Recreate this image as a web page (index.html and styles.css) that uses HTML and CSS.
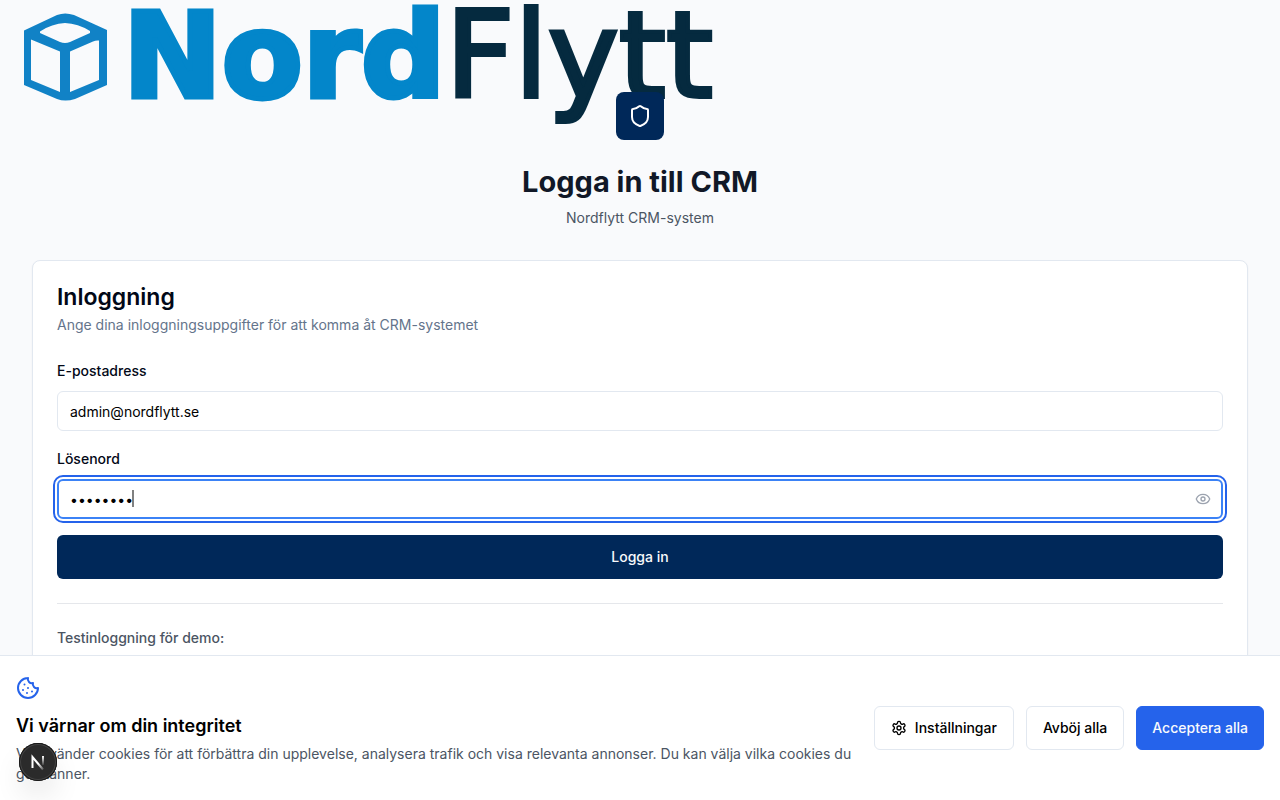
FILE: index.html
```html
<!DOCTYPE html>
<html lang="sv">
<head>
<meta charset="utf-8">
<meta name="viewport" content="width=device-width, initial-scale=1">
<title>Logga in till CRM</title>
<link rel="stylesheet" href="styles.css">
</head>
<body>
<a class="brand" href="#" aria-label="NordFlytt">
  <svg class="brand-mark" viewBox="0 0 83 88" fill="#1182c6" fill-rule="evenodd" aria-hidden="true">
    <path d="M0 17.500 33 2Q41 -1 50 2L83 17V72L51 86Q41 89 33 86L0 72ZM16 20 36 29Q41 31 46 29L66 20V18Q54 10.500 41 10Q28 10.500 16 18.500ZM7 26.500V67L36 79V38.500ZM46 38.500V79L75 67V27.500Q72 27 69 28.500Z"/>
  </svg>
  <span class="brand-name"><span class="brand-nord">Nord</span><span class="brand-flytt">Flytt</span></span>
</a>

<main class="page">
  <header class="intro">
    <div class="shield">
      <svg width="24" height="24" viewBox="0 0 24 24" fill="none" stroke="currentColor" stroke-width="2" stroke-linecap="round" stroke-linejoin="round" aria-hidden="true"><path d="M20 13c0 5-3.500 7.500-7.660 8.950a1 1 0 0 1-.67-.01C7.500 20.500 4 18 4 13V6a1 1 0 0 1 1-1c2 0 4.500-1.200 6.240-2.720a1.170 1.170 0 0 1 1.520 0C14.510 3.810 17 5 19 5a1 1 0 0 1 1 1z"/></svg>
    </div>
    <h1 class="intro-title">Logga in till CRM</h1>
    <p class="intro-text">Nordflytt CRM-system</p>
  </header>

  <section class="card">
    <h2 class="card-title">Inloggning</h2>
    <p class="card-text">Ange dina inloggningsuppgifter för att komma åt CRM-systemet</p>
    <form class="form">
      <div class="field">
        <label class="label" for="email">E-postadress</label>
        <input class="input" id="email" type="email" value="admin@nordflytt.se">
      </div>
      <div class="field">
        <label class="label" for="password">Lösenord</label>
        <div class="password">
          <input class="input input-active" id="password" type="password" value="admin123" autofocus>
          <span class="caret" aria-hidden="true"></span>
          <button class="reveal" type="button" aria-label="Visa lösenord">
            <svg width="16" height="16" viewBox="0 0 24 24" fill="none" stroke="currentColor" stroke-width="2" stroke-linecap="round" stroke-linejoin="round" aria-hidden="true"><path d="M2.062 12.348a1 1 0 0 1 0-.696 10.750 10.750 0 0 1 19.876 0 1 1 0 0 1 0 .696 10.750 10.750 0 0 1-19.876 0"/><circle cx="12" cy="12" r="3"/></svg>
          </button>
        </div>
      </div>
      <button class="submit" type="submit">Logga in</button>
    </form>
    <div class="demo">
      <p class="demo-title">Testinloggning för demo:</p>
    </div>
  </section>
</main>

<aside class="cookies">
  <div class="cookies-body">
    <svg class="cookies-icon" width="24" height="24" viewBox="0 0 24 24" fill="none" stroke="currentColor" stroke-width="2" stroke-linecap="round" stroke-linejoin="round" aria-hidden="true"><path d="M12 2a10 10 0 1 0 10 10 4 4 0 0 1-5-5 4 4 0 0 1-5-5"/><path d="M8.500 8.500v.01M16 15.500v.01M12 12v.01M11 17v.01M7 14v.01"/></svg>
    <h3 class="cookies-title">Vi värnar om din integritet</h3>
    <p class="cookies-text">Vi använder cookies för att förbättra din upplevelse, analysera trafik och visa relevanta annonser. Du kan välja vilka cookies du godkänner.</p>
  </div>
  <div class="cookies-actions">
    <button class="button" type="button">
      <svg width="16" height="16" viewBox="0 0 24 24" fill="none" stroke="currentColor" stroke-width="2" stroke-linecap="round" stroke-linejoin="round" aria-hidden="true"><path d="M12.220 2h-.44a2 2 0 0 0-2 2v.18a2 2 0 0 1-1 1.730l-.43.25a2 2 0 0 1-2 0l-.15-.08a2 2 0 0 0-2.730.73l-.22.38a2 2 0 0 0 .73 2.730l.15.1a2 2 0 0 1 1 1.720v.51a2 2 0 0 1-1 1.740l-.15.09a2 2 0 0 0-.73 2.730l.22.38a2 2 0 0 0 2.730.73l.15-.08a2 2 0 0 1 2 0l.43.25a2 2 0 0 1 1 1.730V20a2 2 0 0 0 2 2h.44a2 2 0 0 0 2-2v-.18a2 2 0 0 1 1-1.730l.43-.25a2 2 0 0 1 2 0l.15.08a2 2 0 0 0 2.730-.73l.22-.39a2 2 0 0 0-.73-2.730l-.15-.08a2 2 0 0 1-1-1.740v-.5a2 2 0 0 1 1-1.740l.15-.09a2 2 0 0 0 .73-2.730l-.22-.38a2 2 0 0 0-2.730-.73l-.15.08a2 2 0 0 1-2 0l-.43-.25a2 2 0 0 1-1-1.730V4a2 2 0 0 0-2-2z"/><circle cx="12" cy="12" r="3"/></svg>
      Inställningar
    </button>
    <button class="button" type="button">Avböj alla</button>
    <button class="button button-primary" type="button">Acceptera alla</button>
  </div>
</aside>

<button class="devtools" type="button" aria-label="Utvecklarverktyg">
  <svg width="38" height="38" viewBox="0 0 38 38" fill="none" stroke-width="2" aria-hidden="true">
    <defs>
      <linearGradient id="diagonal" x1="20" y1="20" x2="25" y2="26" gradientUnits="userSpaceOnUse"><stop stop-color="#fff"/><stop offset="1" stop-color="#fff" stop-opacity="0.200"/></linearGradient>
      <linearGradient id="stem" x1="24" y1="13" x2="24" y2="23" gradientUnits="userSpaceOnUse"><stop stop-color="#fff"/><stop offset="1" stop-color="#fff" stop-opacity="0"/></linearGradient>
    </defs>
    <path d="M13.500 25V14L24 26.500" stroke="url(#diagonal)"/>
    <path d="M24 13V22" stroke="url(#stem)"/>
  </svg>
</button>
</body>
</html>
```

FILE: styles.css
```css
* {
  box-sizing: border-box;
}

body {
  margin: 0;
  min-height: 100vh;
  overflow: hidden;
  background: #f9fafc;
  color: #020817;
  font-family: Inter, "Liberation Sans", sans-serif;
  font-size: 14px;
  line-height: 20px;
}

h1, h2, h3, p {
  margin: 0;
}

button, input {
  font: inherit;
}

button {
  cursor: pointer;
}

/* Brand */
.brand {
  position: absolute;
  top: 0;
  left: 24px;
  display: flex;
  align-items: flex-start;
  gap: 16px;
  text-decoration: none;
}

.brand-mark {
  width: 83px;
  height: 88px;
  margin-top: 13px;
}

.brand-name {
  display: flex;
  align-items: baseline;
  font-family: "DejaVu Sans", sans-serif;
  font-size: 118px;
  line-height: 112px;
}

.brand-nord {
  color: #0386ca;
  font-weight: 700;
  -webkit-text-stroke: 5px #0386ca;
}

.brand-flytt {
  color: #052a3f;
  font-size: 120px;
  font-weight: 400;
  -webkit-text-stroke: 4px #052a3f;
}

/* Page */
.page {
  position: relative;
  display: flex;
  flex-direction: column;
  gap: 32px;
  padding: 92px 32px 32px;
  pointer-events: none;
}

.page > * {
  pointer-events: auto;
}

.intro {
  display: flex;
  flex-direction: column;
  align-items: center;
  text-align: center;
}

.shield {
  display: grid;
  place-items: center;
  width: 48px;
  height: 48px;
  margin-bottom: 24px;
  border-radius: 8px;
  background: #002859;
  color: #fff;
}

.intro-title {
  margin-bottom: 8px;
  color: #111827;
  font-size: 29px;
  font-weight: 700;
  line-height: 36px;
}

.intro-text {
  color: #4b5563;
}

.card {
  padding: 24px;
  border: 1px solid #e2e8f0;
  border-radius: 8px;
  background: #fff;
  box-shadow: 0 1px 2px rgba(0, 0, 0, 0.05);
}

.card-title {
  margin-bottom: 6px;
  font-size: 23px;
  font-weight: 600;
  line-height: 24px;
}

.card-text {
  color: #64748b;
}

.form {
  display: flex;
  flex-direction: column;
  gap: 16px;
  margin-top: 24px;
}

.field {
  display: flex;
  flex-direction: column;
  gap: 8px;
}

.label {
  font-weight: 500;
  line-height: 24px;
}

.input {
  display: block;
  width: 100%;
  height: 40px;
  padding: 8px 12px;
  border: 1px solid #e2e8f0;
  border-radius: 6px;
  background: #fff;
  color: #000;
}

.password {
  position: relative;
}

.input-active,
.input-active:focus {
  padding: 8px 40px 8px 11px;
  border: 2px solid #3b82f6;
  outline: 2px solid #2563eb;
  outline-offset: 2px;
  caret-color: transparent;
}

.caret {
  position: absolute;
  top: 11px;
  left: 75px;
  width: 2px;
  height: 17px;
  background: #808080;
}

.reveal {
  position: absolute;
  top: 0;
  right: 0;
  display: grid;
  place-items: center;
  width: 40px;
  height: 40px;
  padding: 0;
  border: 0;
  background: none;
  color: #9ca3af;
}

.submit {
  height: 44px;
  border: 0;
  border-radius: 6px;
  background: #002859;
  color: #f8fafc;
  font-weight: 500;
}

.demo {
  min-height: 140px;
  margin-top: 24px;
  padding-top: 24px;
  border-top: 1px solid #e5e7eb;
}

.demo-title {
  color: #4b5563;
  font-weight: 500;
}

/* Cookie banner */
.cookies {
  position: fixed;
  right: 0;
  bottom: 0;
  left: 0;
  display: flex;
  align-items: center;
  gap: 16px;
  padding: 16px;
  border-top: 1px solid #e2e8f0;
  background: #fff;
}

.cookies-body {
  flex: 1;
}

.cookies-icon {
  display: block;
  margin: 4px 0 12px;
  color: #2563eb;
}

.cookies-title {
  margin-bottom: 4px;
  color: #000;
  font-size: 18px;
  font-weight: 600;
  line-height: 28px;
}

.cookies-text {
  color: #4b5563;
}

.cookies-actions {
  display: flex;
  gap: 12px;
}

.button {
  display: flex;
  align-items: center;
  gap: 8px;
  height: 44px;
  padding: 0 16px;
  border: 1px solid #e2e8f0;
  border-radius: 6px;
  background: #fff;
  color: #000;
  font-weight: 500;
  white-space: nowrap;
}

.button-primary {
  padding: 0 15px;
  border-color: #2563eb;
  background: #2563eb;
  color: #f8fafc;
}

/* Floating developer button */
.devtools {
  position: fixed;
  bottom: 19px;
  left: 19px;
  display: grid;
  place-items: center;
  width: 38px;
  height: 38px;
  padding: 0;
  border: 0;
  border-radius: 50%;
  background: #2b2b2b;
  box-shadow: inset 0 0 0 1px #171717, inset 0 0 0 2px #444, 0 16px 32px -8px rgba(0, 0, 0, 0.24);
}
```
